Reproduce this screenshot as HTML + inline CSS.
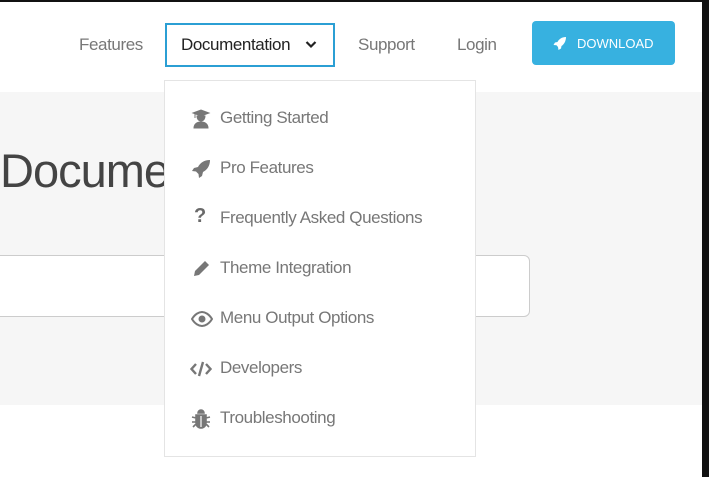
<!DOCTYPE html>
<html><head><style>
body{margin:0;width:709px;height:477px;overflow:hidden;background:#fff;font-family:"Liberation Sans",sans-serif;position:relative}
.a{position:absolute}
.nav{font-size:17px;color:#777;top:35px;letter-spacing:-0.4px}
.band{left:0;top:92px;width:702px;height:313px;background:#f6f6f6}
.menu{left:164px;top:80px;width:310px;height:375px;background:#fff;border:1px solid #e4e4e4}
.it{position:absolute;left:55px;font-size:17px;color:#777;letter-spacing:-0.4px}
.ic{position:absolute;left:26px;width:20px;height:20px}
</style></head><body>
<div class="a" style="left:0;top:0;width:709px;height:2px;background:#111"></div>
<div class="a" style="left:702px;top:0;width:7px;height:477px;background:#111"></div>
<div class="a band"></div>
<div class="a" style="left:0;top:143px;font-size:47px;color:#444;letter-spacing:-1px">Documentation</div>
<div class="a" style="left:-10px;top:255px;width:538px;height:60px;background:#fff;border:1px solid #ccc;border-radius:6px"></div>
<div class="a" style="left:0;top:2px;width:702px;height:90px;background:#fff"></div>
<div class="a nav" style="left:79px">Features</div>
<div class="a" style="left:165px;top:23px;width:166px;height:40px;border:2px solid #2b9fd4"></div>
<div class="a nav" style="left:181px;color:#222">Documentation</div>
<svg class="a" style="left:305px;top:40px" width="12" height="9" viewBox="0 0 12 9"><path d="M1.5 2l4.5 4.5L10.5 2" stroke="#222" stroke-width="2.2" fill="none"/></svg>
<div class="a nav" style="left:358px">Support</div>
<div class="a nav" style="left:457px">Login</div>
<div class="a" style="left:532px;top:21px;width:143px;height:44px;background:#37b1e0;border-radius:4px"></div>
<svg class="a" style="left:553px;top:36px" width="14" height="14" viewBox="0 0 14 14"><path d="M13 1C9 1 6 3 4.5 6L2 6.5 0.5 9l3 0.3L5 11l.5 3 2.5-1.5.5-2.5C11 8.5 13 5 13 1z" fill="#fff"/></svg>
<div class="a" style="left:577px;top:36px;font-size:13px;color:#fff">DOWNLOAD</div>
<div class="a menu">
<div class="it" style="top:27px">Getting Started</div>
<div class="it" style="top:77px">Pro Features</div>
<div class="it" style="top:127px">Frequently Asked Questions</div>
<div class="it" style="top:177px">Theme Integration</div>
<div class="it" style="top:227px">Menu Output Options</div>
<div class="it" style="top:277px">Developers</div>
<div class="it" style="top:327px">Troubleshooting</div>
<svg class="ic" style="top:28px" viewBox="0 0 20 20"><path d="M2 4l8-3 8 3-8 3z M4 5v4 M6 7c0 3 1.5 5 4 5s4-2 4-5z M3 19c0-4 3-6 7-6s7 2 7 6z" fill="#777" stroke="#777" stroke-width="1"/></svg>
<svg class="ic" style="top:78px" viewBox="0 0 20 20"><path d="M19 1C13 1 9 4 7 8L3 9 1 12l4 .5L7.5 15l.5 4 3-2 1-4C16 11 19 7 19 1z" fill="#777"/></svg>
<div class="it" style="top:124px;left:29px;font-size:20px;font-weight:bold;color:#6a6a6a">?</div>
<svg class="ic" style="top:178px" viewBox="0 0 20 20"><path d="M14 2l4 4-10 10-5 1 1-5z" fill="#777"/></svg>
<svg class="ic" style="top:228px;left:26px;width:22px" viewBox="0 0 22 20"><path d="M1 10c3-5 7-7 10-7s7 2 10 7c-3 5-7 7-10 7S4 15 1 10z" fill="none" stroke="#777" stroke-width="2"/><circle cx="11" cy="10" r="3.5" fill="#777"/></svg>
<svg class="ic" style="top:278px;left:25px;width:22px" viewBox="0 0 22 20"><path d="M6 5L1.5 10 6 15 M16 5l4.5 5-4.5 5 M13 3L9 17" fill="none" stroke="#777" stroke-width="2.4"/></svg>
<svg class="ic" style="top:328px" viewBox="0 0 20 20"><path d="M7 4a3 3 0 016 0z M5 6h10v8a5 5 0 01-10 0z M1 8l4 1 M19 8l-4 1 M1 13h4 M19 13h-4 M2 18l3-3 M18 18l-3-3" fill="#777" stroke="#777" stroke-width="1.6"/><path d="M10 7v11" stroke="#fff" stroke-width="1.2"/></svg>
</div>
</body></html>
